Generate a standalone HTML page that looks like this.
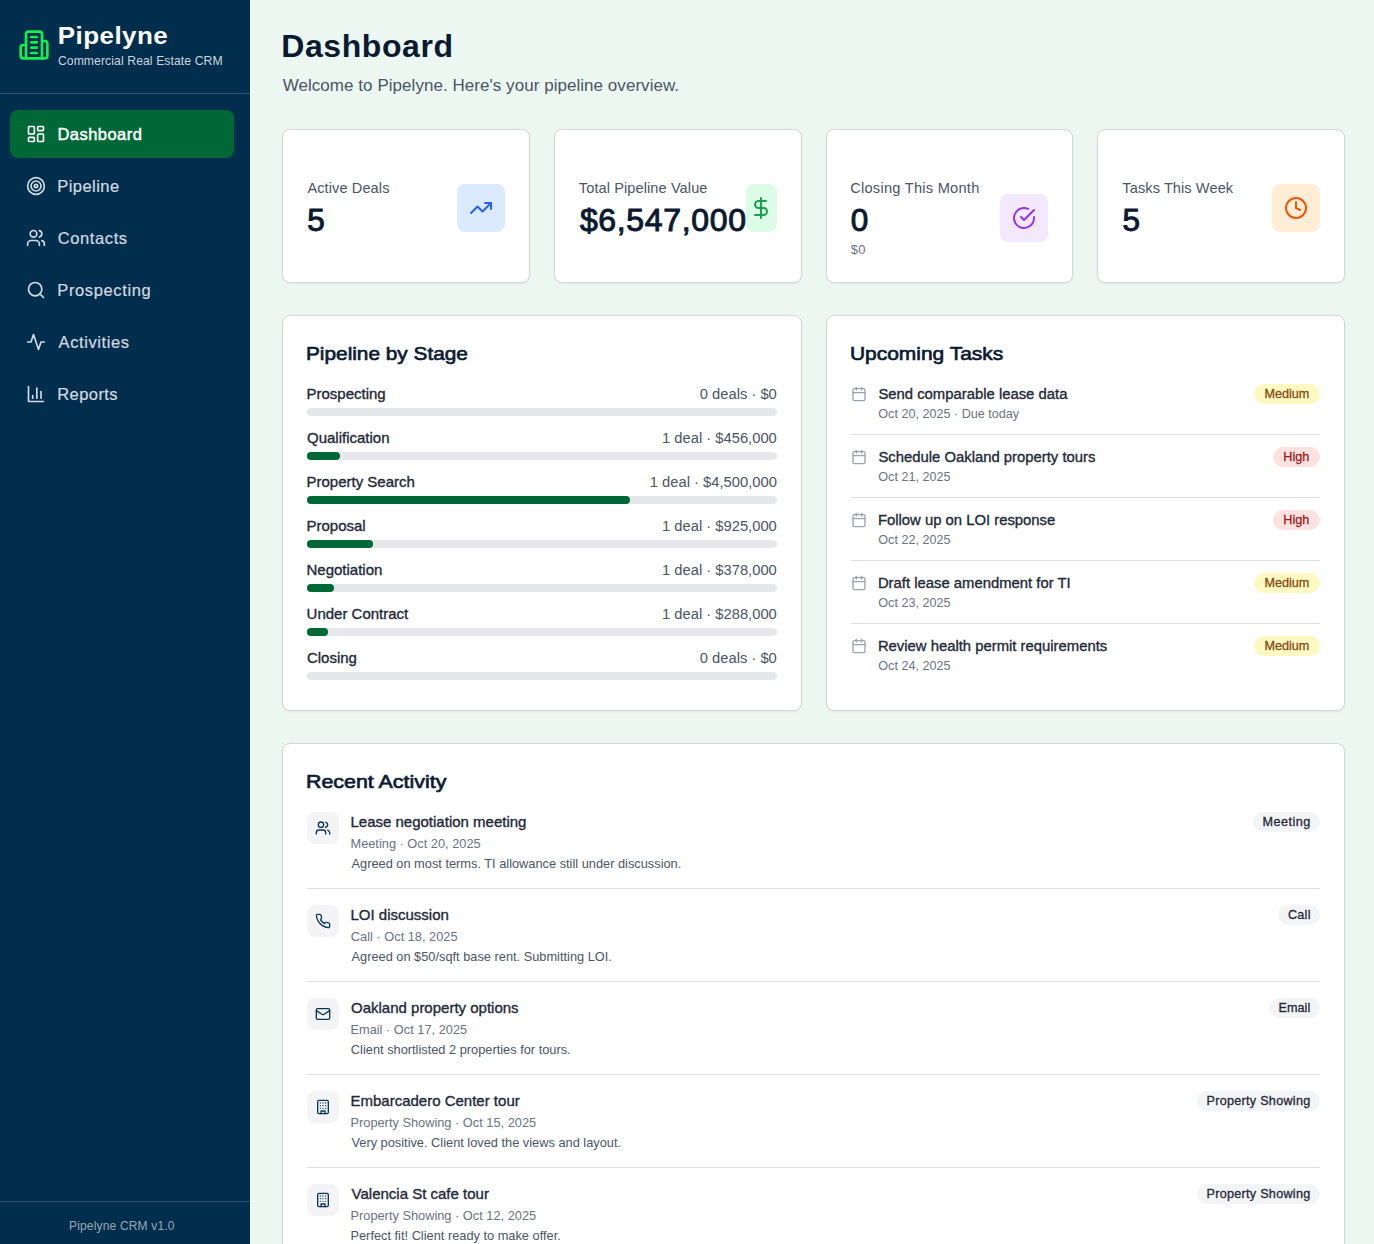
<!DOCTYPE html>
<html><head><meta charset="utf-8"><title>Pipelyne Dashboard</title>
<style>
html,body{margin:0;padding:0;width:1374px;height:1244px;overflow:hidden;background:#ecf7f2;}
body{position:relative;font-family:"Liberation Sans",sans-serif;}
.t{position:absolute;white-space:nowrap;line-height:1;}
.r{position:absolute;box-sizing:border-box;}
.card{background:#fff;border:1px solid #d3d6de;border-radius:8px;box-shadow:0 1px 2px rgba(0,0,0,0.05);}
.i{position:absolute;overflow:visible;}
</style></head><body>
<div class="r" style="left:0px;top:0px;width:250px;height:1244px;background:#012e4c;border-radius:0px;"></div>
<div class="r" style="left:250px;top:0px;width:1px;height:1244px;background:#f4f8fa;border-radius:0px;"></div>
<svg class="i" style="left:18px;top:29px;" width="32" height="32" viewBox="0 0 24 24" fill="none" stroke="#12f04e" stroke-width="2" stroke-linecap="round" stroke-linejoin="round"><path d="M6 22V4a2 2 0 0 1 2-2h8a2 2 0 0 1 2 2v18Z"/><path d="M6 12H4a2 2 0 0 0-2 2v6a2 2 0 0 0 2 2h2"/><path d="M18 9h2a2 2 0 0 1 2 2v9a2 2 0 0 1-2 2h-2"/><path d="M10 6h4"/><path d="M10 10h4"/><path d="M10 14h4"/><path d="M10 18h4"/></svg>
<div class="t" style="left:57.71px;top:22px;font-size:26px;color:#ffffff;font-weight:700;letter-spacing:0.449px;transform:scale(1.0000,0.93);transform-origin:0 22px;">Pipelyne</div>
<div class="t" style="left:57.89px;top:55px;font-size:12.2px;color:#cdd5de;letter-spacing:0.088px;">Commercial Real Estate CRM</div>
<div class="r" style="left:0px;top:93px;width:250px;height:1px;background:#33546d;border-radius:0px;"></div>
<div class="r" style="left:10px;top:110px;width:224px;height:48px;background:#006837;border-radius:8px;"></div>
<svg class="i" style="left:26px;top:124px;" width="20" height="20" viewBox="0 0 24 24" fill="none" stroke="#ffffff" stroke-width="2" stroke-linecap="round" stroke-linejoin="round"><rect width="7" height="9" x="3" y="3" rx="1"/><rect width="7" height="5" x="14" y="3" rx="1"/><rect width="7" height="9" x="14" y="12" rx="1"/><rect width="7" height="5" x="3" y="16" rx="1"/></svg>
<div class="t" style="left:57.41px;top:126px;font-size:16.5px;color:#ffffff;letter-spacing:0.470px;-webkit-text-stroke:0.45px #ffffff;">Dashboard</div>
<svg class="i" style="left:26px;top:176px;" width="20" height="20" viewBox="0 0 24 24" fill="none" stroke="#d3d9e0" stroke-width="2" stroke-linecap="round" stroke-linejoin="round"><circle cx="12" cy="12" r="10"/><circle cx="12" cy="12" r="6"/><circle cx="12" cy="12" r="2"/></svg>
<div class="t" style="left:57.28px;top:178px;font-size:16.5px;color:#d3d9e0;letter-spacing:0.444px;-webkit-text-stroke:0.2px #d3d9e0;">Pipeline</div>
<svg class="i" style="left:26px;top:228px;" width="20" height="20" viewBox="0 0 24 24" fill="none" stroke="#d3d9e0" stroke-width="2" stroke-linecap="round" stroke-linejoin="round"><path d="M16 21v-2a4 4 0 0 0-4-4H6a4 4 0 0 0-4 4v2"/><circle cx="9" cy="7" r="4"/><path d="M22 21v-2a4 4 0 0 0-3-3.87"/><path d="M16 3.13a4 4 0 0 1 0 7.75"/></svg>
<div class="t" style="left:57.77px;top:230px;font-size:16.5px;color:#d3d9e0;letter-spacing:0.601px;-webkit-text-stroke:0.2px #d3d9e0;">Contacts</div>
<svg class="i" style="left:26px;top:280px;" width="20" height="20" viewBox="0 0 24 24" fill="none" stroke="#d3d9e0" stroke-width="2" stroke-linecap="round" stroke-linejoin="round"><circle cx="11" cy="11" r="8"/><path d="m21 21-4.3-4.3"/></svg>
<div class="t" style="left:57.28px;top:282px;font-size:16.5px;color:#d3d9e0;letter-spacing:0.627px;-webkit-text-stroke:0.2px #d3d9e0;">Prospecting</div>
<svg class="i" style="left:26px;top:332px;" width="20" height="20" viewBox="0 0 24 24" fill="none" stroke="#d3d9e0" stroke-width="2" stroke-linecap="round" stroke-linejoin="round"><path d="M22 12h-4l-3 9L9 3l-3 9H2"/></svg>
<div class="t" style="left:58.60px;top:334px;font-size:16.5px;color:#d3d9e0;letter-spacing:0.587px;-webkit-text-stroke:0.2px #d3d9e0;">Activities</div>
<svg class="i" style="left:26px;top:384px;" width="20" height="20" viewBox="0 0 24 24" fill="none" stroke="#d3d9e0" stroke-width="2" stroke-linecap="round" stroke-linejoin="round"><path d="M3 3v18h18"/><path d="M18 17V9"/><path d="M13 17V5"/><path d="M8 17v-3"/></svg>
<div class="t" style="left:57.28px;top:386px;font-size:16.5px;color:#d3d9e0;letter-spacing:0.425px;-webkit-text-stroke:0.2px #d3d9e0;">Reports</div>
<div class="r" style="left:0px;top:1201px;width:250px;height:1px;background:#33546d;border-radius:0px;"></div>
<div class="t" style="left:69.04px;top:1220px;font-size:12px;color:#9aa8b6;letter-spacing:0.166px;">Pipelyne CRM v1.0</div>
<div class="r" style="left:251px;top:0px;width:1123px;height:1244px;background:#ecf7f2;border-radius:0px;"></div>
<div class="t" style="left:281.22px;top:30px;font-size:32px;color:#0b1a31;font-weight:700;letter-spacing:0.590px;">Dashboard</div>
<div class="t" style="left:282.72px;top:77px;font-size:17px;color:#4b5563;letter-spacing:0.045px;">Welcome to Pipelyne. Here's your pipeline overview.</div>
<div class="r card" style="left:282.0px;top:129px;width:247.75px;height:154px;"></div>
<div class="t" style="left:307.40px;top:181px;font-size:14.6px;color:#4b5563;letter-spacing:0.085px;">Active Deals</div>
<div class="t" style="left:307.24px;top:205px;font-size:31.5px;color:#0b1a31;-webkit-text-stroke:1.0px #0b1a31;">5</div>
<div class="r" style="left:456.75px;top:184px;width:48px;height:48px;background:#dbeafe;border-radius:8px;"></div>
<svg class="i" style="left:468.75px;top:196px;" width="24" height="24" viewBox="0 0 24 24" fill="none" stroke="#2563eb" stroke-width="2" stroke-linecap="round" stroke-linejoin="round"><polyline points="22 7 13.5 15.5 8.5 10.5 2 17"/><polyline points="16 7 22 7 22 13"/></svg>
<div class="r card" style="left:553.75px;top:129px;width:247.75px;height:154px;"></div>
<div class="t" style="left:578.86px;top:181px;font-size:14.6px;color:#4b5563;letter-spacing:0.078px;">Total Pipeline Value</div>
<div class="t" style="left:579.93px;top:204px;font-size:32px;color:#0b1a31;letter-spacing:0.653px;-webkit-text-stroke:1.0px #0b1a31;">$6,547,000</div>
<div class="r" style="left:746.0px;top:184px;width:30.5px;height:48px;background:#dcfce7;border-radius:8px;"></div>
<svg class="i" style="left:749.25px;top:196px;" width="24" height="24" viewBox="0 0 24 24" fill="none" stroke="#16a34a" stroke-width="2" stroke-linecap="round" stroke-linejoin="round"><line x1="12" x2="12" y1="2" y2="22"/><path d="M17 5H9.5a3.5 3.5 0 0 0 0 7h5a3.5 3.5 0 0 1 0 7H6"/></svg>
<div class="r card" style="left:825.5px;top:129px;width:247.75px;height:154px;"></div>
<div class="t" style="left:850.17px;top:181px;font-size:14.6px;color:#4b5563;letter-spacing:0.264px;">Closing This Month</div>
<div class="t" style="left:850.74px;top:205px;font-size:31.5px;color:#0b1a31;-webkit-text-stroke:1.0px #0b1a31;">0</div>
<div class="t" style="left:850.77px;top:243px;font-size:13px;color:#6b7280;letter-spacing:0.355px;">$0</div>
<div class="r" style="left:1000.25px;top:194px;width:48px;height:48px;background:#f3e8ff;border-radius:8px;"></div>
<svg class="i" style="left:1012.25px;top:206px;" width="24" height="24" viewBox="0 0 24 24" fill="none" stroke="#9333ea" stroke-width="2" stroke-linecap="round" stroke-linejoin="round"><path d="M22 11.08V12a10 10 0 1 1-5.93-9.14"/><path d="m9 11 3 3L22 4"/></svg>
<div class="r card" style="left:1097.25px;top:129px;width:247.75px;height:154px;"></div>
<div class="t" style="left:1122.36px;top:181px;font-size:14.6px;color:#4b5563;letter-spacing:0.071px;">Tasks This Week</div>
<div class="t" style="left:1122.49px;top:205px;font-size:31.5px;color:#0b1a31;-webkit-text-stroke:1.0px #0b1a31;">5</div>
<div class="r" style="left:1272.0px;top:184px;width:48px;height:48px;background:#ffedd5;border-radius:8px;"></div>
<svg class="i" style="left:1284.0px;top:196px;" width="24" height="24" viewBox="0 0 24 24" fill="none" stroke="#ea580c" stroke-width="2" stroke-linecap="round" stroke-linejoin="round"><circle cx="12" cy="12" r="10"/><polyline points="12 6 12 12 16 14"/></svg>
<div class="r card" style="left:282px;top:315px;width:519.5px;height:396px;"></div>
<div class="t" style="left:306.40px;top:345px;font-size:18.6px;color:#0b1a31;-webkit-text-stroke:0.65px #0b1a31;transform:scale(1.1186,1);transform-origin:0 15px;">Pipeline by Stage</div>
<div class="t" style="left:306.48px;top:386px;font-size:15px;color:#1f2937;-webkit-text-stroke:0.35px #1f2937;">Prospecting</div>
<div class="t" style="left:699.75px;top:387px;font-size:14.75px;color:#4b5563;">0 deals · $0</div>
<div class="r" style="left:307px;top:408px;width:470px;height:8px;background:#e5e7eb;border-radius:4px;"></div>
<div class="t" style="left:307.00px;top:430px;font-size:15px;color:#1f2937;-webkit-text-stroke:0.35px #1f2937;">Qualification</div>
<div class="t" style="left:661.99px;top:431px;font-size:14.75px;color:#4b5563;">1 deal · $456,000</div>
<div class="r" style="left:307px;top:452px;width:470px;height:8px;background:#e5e7eb;border-radius:4px;"></div>
<div class="r" style="left:307px;top:452px;width:32.74px;height:8px;background:#006837;border-radius:4px;"></div>
<div class="t" style="left:306.48px;top:474px;font-size:15px;color:#1f2937;-webkit-text-stroke:0.35px #1f2937;">Property Search</div>
<div class="t" style="left:649.74px;top:475px;font-size:14.75px;color:#4b5563;">1 deal · $4,500,000</div>
<div class="r" style="left:307px;top:496px;width:470px;height:8px;background:#e5e7eb;border-radius:4px;"></div>
<div class="r" style="left:307px;top:496px;width:323.05px;height:8px;background:#006837;border-radius:4px;"></div>
<div class="t" style="left:306.48px;top:518px;font-size:15px;color:#1f2937;-webkit-text-stroke:0.35px #1f2937;">Proposal</div>
<div class="t" style="left:661.99px;top:519px;font-size:14.75px;color:#4b5563;">1 deal · $925,000</div>
<div class="r" style="left:307px;top:540px;width:470px;height:8px;background:#e5e7eb;border-radius:4px;"></div>
<div class="r" style="left:307px;top:540px;width:66.4px;height:8px;background:#006837;border-radius:4px;"></div>
<div class="t" style="left:306.48px;top:562px;font-size:15px;color:#1f2937;-webkit-text-stroke:0.35px #1f2937;">Negotiation</div>
<div class="t" style="left:661.99px;top:563px;font-size:14.75px;color:#4b5563;">1 deal · $378,000</div>
<div class="r" style="left:307px;top:584px;width:470px;height:8px;background:#e5e7eb;border-radius:4px;"></div>
<div class="r" style="left:307px;top:584px;width:27.14px;height:8px;background:#006837;border-radius:4px;"></div>
<div class="t" style="left:306.55px;top:606px;font-size:15px;color:#1f2937;-webkit-text-stroke:0.35px #1f2937;">Under Contract</div>
<div class="t" style="left:661.99px;top:607px;font-size:14.75px;color:#4b5563;">1 deal · $288,000</div>
<div class="r" style="left:307px;top:628px;width:470px;height:8px;background:#e5e7eb;border-radius:4px;"></div>
<div class="r" style="left:307px;top:628px;width:20.68px;height:8px;background:#006837;border-radius:4px;"></div>
<div class="t" style="left:306.93px;top:650px;font-size:15px;color:#1f2937;-webkit-text-stroke:0.35px #1f2937;">Closing</div>
<div class="t" style="left:699.75px;top:651px;font-size:14.75px;color:#4b5563;">0 deals · $0</div>
<div class="r" style="left:307px;top:672px;width:470px;height:8px;background:#e5e7eb;border-radius:4px;"></div>
<div class="r card" style="left:825.5px;top:315px;width:519.5px;height:396px;"></div>
<div class="t" style="left:850.20px;top:345px;font-size:18.6px;color:#0b1a31;-webkit-text-stroke:0.65px #0b1a31;transform:scale(1.1257,1);transform-origin:0 15px;">Upcoming Tasks</div>
<svg class="i" style="left:851px;top:386px;" width="16" height="16" viewBox="0 0 24 24" fill="none" stroke="#9ca3af" stroke-width="2" stroke-linecap="round" stroke-linejoin="round"><rect width="18" height="18" x="3" y="4" rx="2" ry="2"/><line x1="16" x2="16" y1="2" y2="6"/><line x1="8" x2="8" y1="2" y2="6"/><line x1="3" x2="21" y1="10" y2="10"/></svg>
<div class="t" style="left:878.41px;top:387px;font-size:14.85px;color:#1f2937;-webkit-text-stroke:0.35px #1f2937;">Send comparable lease data</div>
<div class="t" style="left:878.33px;top:408px;font-size:12.6px;color:#6b7280;">Oct 20, 2025 · Due today</div>
<div class="r" style="left:1254px;top:384px;width:66px;height:20px;background:#fef9c3;border-radius:10px;"></div>
<div class="t" style="left:1264.48px;top:388px;font-size:12.6px;color:#854d0e;-webkit-text-stroke:0.3px #854d0e;">Medium</div>
<div class="r" style="left:851px;top:434px;width:469px;height:1px;background:#dde1e6;border-radius:0px;"></div>
<svg class="i" style="left:851px;top:449px;" width="16" height="16" viewBox="0 0 24 24" fill="none" stroke="#9ca3af" stroke-width="2" stroke-linecap="round" stroke-linejoin="round"><rect width="18" height="18" x="3" y="4" rx="2" ry="2"/><line x1="16" x2="16" y1="2" y2="6"/><line x1="8" x2="8" y1="2" y2="6"/><line x1="3" x2="21" y1="10" y2="10"/></svg>
<div class="t" style="left:878.41px;top:450px;font-size:14.85px;color:#1f2937;-webkit-text-stroke:0.35px #1f2937;">Schedule Oakland property tours</div>
<div class="t" style="left:878.33px;top:471px;font-size:12.6px;color:#6b7280;">Oct 21, 2025</div>
<div class="r" style="left:1272.8px;top:447px;width:47.2px;height:20px;background:#fee2e2;border-radius:10px;"></div>
<div class="t" style="left:1283.36px;top:451px;font-size:12.6px;color:#991b1b;-webkit-text-stroke:0.3px #991b1b;">High</div>
<div class="r" style="left:851px;top:497px;width:469px;height:1px;background:#dde1e6;border-radius:0px;"></div>
<svg class="i" style="left:851px;top:512px;" width="16" height="16" viewBox="0 0 24 24" fill="none" stroke="#9ca3af" stroke-width="2" stroke-linecap="round" stroke-linejoin="round"><rect width="18" height="18" x="3" y="4" rx="2" ry="2"/><line x1="16" x2="16" y1="2" y2="6"/><line x1="8" x2="8" y1="2" y2="6"/><line x1="3" x2="21" y1="10" y2="10"/></svg>
<div class="t" style="left:877.89px;top:513px;font-size:14.85px;color:#1f2937;-webkit-text-stroke:0.35px #1f2937;">Follow up on LOI response</div>
<div class="t" style="left:878.33px;top:534px;font-size:12.6px;color:#6b7280;">Oct 22, 2025</div>
<div class="r" style="left:1272.8px;top:510px;width:47.2px;height:20px;background:#fee2e2;border-radius:10px;"></div>
<div class="t" style="left:1283.36px;top:514px;font-size:12.6px;color:#991b1b;-webkit-text-stroke:0.3px #991b1b;">High</div>
<div class="r" style="left:851px;top:560px;width:469px;height:1px;background:#dde1e6;border-radius:0px;"></div>
<svg class="i" style="left:851px;top:575px;" width="16" height="16" viewBox="0 0 24 24" fill="none" stroke="#9ca3af" stroke-width="2" stroke-linecap="round" stroke-linejoin="round"><rect width="18" height="18" x="3" y="4" rx="2" ry="2"/><line x1="16" x2="16" y1="2" y2="6"/><line x1="8" x2="8" y1="2" y2="6"/><line x1="3" x2="21" y1="10" y2="10"/></svg>
<div class="t" style="left:877.89px;top:576px;font-size:14.85px;color:#1f2937;-webkit-text-stroke:0.35px #1f2937;">Draft lease amendment for TI</div>
<div class="t" style="left:878.33px;top:597px;font-size:12.6px;color:#6b7280;">Oct 23, 2025</div>
<div class="r" style="left:1254px;top:573px;width:66px;height:20px;background:#fef9c3;border-radius:10px;"></div>
<div class="t" style="left:1264.48px;top:577px;font-size:12.6px;color:#854d0e;-webkit-text-stroke:0.3px #854d0e;">Medium</div>
<div class="r" style="left:851px;top:623px;width:469px;height:1px;background:#dde1e6;border-radius:0px;"></div>
<svg class="i" style="left:851px;top:638px;" width="16" height="16" viewBox="0 0 24 24" fill="none" stroke="#9ca3af" stroke-width="2" stroke-linecap="round" stroke-linejoin="round"><rect width="18" height="18" x="3" y="4" rx="2" ry="2"/><line x1="16" x2="16" y1="2" y2="6"/><line x1="8" x2="8" y1="2" y2="6"/><line x1="3" x2="21" y1="10" y2="10"/></svg>
<div class="t" style="left:877.89px;top:639px;font-size:14.85px;color:#1f2937;-webkit-text-stroke:0.35px #1f2937;">Review health permit requirements</div>
<div class="t" style="left:878.33px;top:660px;font-size:12.6px;color:#6b7280;">Oct 24, 2025</div>
<div class="r" style="left:1254px;top:636px;width:66px;height:20px;background:#fef9c3;border-radius:10px;"></div>
<div class="t" style="left:1264.48px;top:640px;font-size:12.6px;color:#854d0e;-webkit-text-stroke:0.3px #854d0e;">Medium</div>
<div class="r card" style="left:282px;top:743px;width:1063px;height:600px;"></div>
<div class="t" style="left:306.36px;top:773px;font-size:18.6px;color:#0b1a31;-webkit-text-stroke:0.65px #0b1a31;transform:scale(1.1512,1);transform-origin:0 15px;">Recent Activity</div>
<div class="r" style="left:307px;top:812px;width:32px;height:32px;background:#f4f3f5;border-radius:8px;"></div>
<svg class="i" style="left:315px;top:820px;" width="16" height="16" viewBox="0 0 24 24" fill="none" stroke="#0a3658" stroke-width="2" stroke-linecap="round" stroke-linejoin="round"><path d="M16 21v-2a4 4 0 0 0-4-4H6a4 4 0 0 0-4 4v2"/><circle cx="9" cy="7" r="4"/><path d="M22 21v-2a4 4 0 0 0-3-3.87"/><path d="M16 3.13a4 4 0 0 1 0 7.75"/></svg>
<div class="t" style="left:350.48px;top:814px;font-size:15px;color:#1f2937;-webkit-text-stroke:0.35px #1f2937;">Lease negotiation meeting</div>
<div class="t" style="left:350.48px;top:838px;font-size:12.8px;color:#6b7280;">Meeting · Oct 20, 2025</div>
<div class="t" style="left:351.50px;top:858px;font-size:12.8px;color:#4b5563;">Agreed on most terms. TI allowance still under discussion.</div>
<div class="r" style="left:1252.9px;top:812px;width:67.1px;height:20px;background:#f3f4f6;border-radius:10px;"></div>
<div class="t" style="left:1262.49px;top:816px;font-size:12.6px;color:#1f2937;letter-spacing:0.489px;-webkit-text-stroke:0.3px #1f2937;">Meeting</div>
<div class="r" style="left:307px;top:888px;width:1013px;height:1px;background:#dde1e6;border-radius:0px;"></div>
<div class="r" style="left:307px;top:905px;width:32px;height:32px;background:#f4f3f5;border-radius:8px;"></div>
<svg class="i" style="left:315px;top:913px;" width="16" height="16" viewBox="0 0 24 24" fill="none" stroke="#0a3658" stroke-width="2" stroke-linecap="round" stroke-linejoin="round"><path d="M22 16.92v3a2 2 0 0 1-2.18 2 19.79 19.79 0 0 1-8.63-3.07 19.5 19.5 0 0 1-6-6 19.79 19.79 0 0 1-3.07-8.67A2 2 0 0 1 4.11 2h3a2 2 0 0 1 2 1.72 12.84 12.84 0 0 0 .7 2.81 2 2 0 0 1-.45 2.11L8.09 9.91a16 16 0 0 0 6 6l1.27-1.27a2 2 0 0 1 2.11-.45 12.84 12.84 0 0 0 2.81.7A2 2 0 0 1 22 16.92z"/></svg>
<div class="t" style="left:350.48px;top:907px;font-size:15px;color:#1f2937;-webkit-text-stroke:0.35px #1f2937;">LOI discussion</div>
<div class="t" style="left:350.86px;top:931px;font-size:12.8px;color:#6b7280;">Call · Oct 18, 2025</div>
<div class="t" style="left:351.50px;top:951px;font-size:12.8px;color:#4b5563;">Agreed on $50/sqft base rent. Submitting LOI.</div>
<div class="r" style="left:1278.2px;top:905px;width:41.8px;height:20px;background:#f3f4f6;border-radius:10px;"></div>
<div class="t" style="left:1287.97px;top:909px;font-size:12.6px;color:#1f2937;letter-spacing:0.259px;-webkit-text-stroke:0.3px #1f2937;">Call</div>
<div class="r" style="left:307px;top:981px;width:1013px;height:1px;background:#dde1e6;border-radius:0px;"></div>
<div class="r" style="left:307px;top:998px;width:32px;height:32px;background:#f4f3f5;border-radius:8px;"></div>
<svg class="i" style="left:315px;top:1006px;" width="16" height="16" viewBox="0 0 24 24" fill="none" stroke="#0a3658" stroke-width="2" stroke-linecap="round" stroke-linejoin="round"><rect width="20" height="16" x="2" y="4" rx="2"/><path d="m22 7-8.97 5.7a1.94 1.94 0 0 1-2.06 0L2 7"/></svg>
<div class="t" style="left:351.00px;top:1000px;font-size:15px;color:#1f2937;-webkit-text-stroke:0.35px #1f2937;">Oakland property options</div>
<div class="t" style="left:350.48px;top:1024px;font-size:12.8px;color:#6b7280;">Email · Oct 17, 2025</div>
<div class="t" style="left:350.86px;top:1044px;font-size:12.8px;color:#4b5563;">Client shortlisted 2 properties for tours.</div>
<div class="r" style="left:1268.9px;top:998px;width:51.1px;height:20px;background:#f3f4f6;border-radius:10px;"></div>
<div class="t" style="left:1278.49px;top:1002px;font-size:12.6px;color:#1f2937;letter-spacing:0.057px;-webkit-text-stroke:0.3px #1f2937;">Email</div>
<div class="r" style="left:307px;top:1074px;width:1013px;height:1px;background:#dde1e6;border-radius:0px;"></div>
<div class="r" style="left:307px;top:1091px;width:32px;height:32px;background:#f4f3f5;border-radius:8px;"></div>
<svg class="i" style="left:315px;top:1099px;" width="16" height="16" viewBox="0 0 24 24" fill="none" stroke="#0a3658" stroke-width="2" stroke-linecap="round" stroke-linejoin="round"><rect width="16" height="20" x="4" y="2" rx="2" ry="2"/><path d="M9 22v-4h6v4"/><path d="M8 6h.01"/><path d="M16 6h.01"/><path d="M12 6h.01"/><path d="M12 10h.01"/><path d="M12 14h.01"/><path d="M16 10h.01"/><path d="M16 14h.01"/><path d="M8 10h.01"/><path d="M8 14h.01"/></svg>
<div class="t" style="left:350.48px;top:1093px;font-size:15px;color:#1f2937;-webkit-text-stroke:0.35px #1f2937;">Embarcadero Center tour</div>
<div class="t" style="left:350.48px;top:1117px;font-size:12.8px;color:#6b7280;">Property Showing · Oct 15, 2025</div>
<div class="t" style="left:351.44px;top:1137px;font-size:12.8px;color:#4b5563;">Very positive. Client loved the views and layout.</div>
<div class="r" style="left:1196.9px;top:1091px;width:123.1px;height:20px;background:#f3f4f6;border-radius:10px;"></div>
<div class="t" style="left:1206.49px;top:1095px;font-size:12.6px;color:#1f2937;letter-spacing:0.288px;-webkit-text-stroke:0.3px #1f2937;">Property Showing</div>
<div class="r" style="left:307px;top:1167px;width:1013px;height:1px;background:#dde1e6;border-radius:0px;"></div>
<div class="r" style="left:307px;top:1184px;width:32px;height:32px;background:#f4f3f5;border-radius:8px;"></div>
<svg class="i" style="left:315px;top:1192px;" width="16" height="16" viewBox="0 0 24 24" fill="none" stroke="#0a3658" stroke-width="2" stroke-linecap="round" stroke-linejoin="round"><rect width="16" height="20" x="4" y="2" rx="2" ry="2"/><path d="M9 22v-4h6v4"/><path d="M8 6h.01"/><path d="M16 6h.01"/><path d="M12 6h.01"/><path d="M12 10h.01"/><path d="M12 14h.01"/><path d="M16 10h.01"/><path d="M16 14h.01"/><path d="M8 10h.01"/><path d="M8 14h.01"/></svg>
<div class="t" style="left:351.60px;top:1186px;font-size:15px;color:#1f2937;-webkit-text-stroke:0.35px #1f2937;">Valencia St cafe tour</div>
<div class="t" style="left:350.48px;top:1210px;font-size:12.8px;color:#6b7280;">Property Showing · Oct 12, 2025</div>
<div class="t" style="left:350.48px;top:1230px;font-size:12.8px;color:#4b5563;">Perfect fit! Client ready to make offer.</div>
<div class="r" style="left:1196.9px;top:1184px;width:123.1px;height:20px;background:#f3f4f6;border-radius:10px;"></div>
<div class="t" style="left:1206.49px;top:1188px;font-size:12.6px;color:#1f2937;letter-spacing:0.288px;-webkit-text-stroke:0.3px #1f2937;">Property Showing</div>
</body></html>
